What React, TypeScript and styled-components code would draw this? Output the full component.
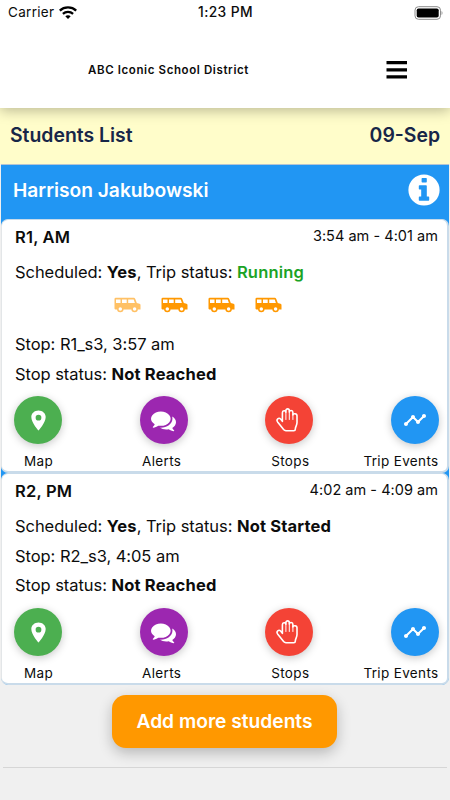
import React from "react";
import styled, { createGlobalStyle } from "styled-components";
import { IoLocationSharp } from "react-icons/io5";
import { MdTimeline } from "react-icons/md";

const GlobalStyle = createGlobalStyle`
  * { box-sizing: border-box; }
  body {
    margin: 0;
    background: #f0f0f0;
    font-family: Inter, "Liberation Sans", sans-serif;
    color: #0c0c0c;
  }
`;

const Screen = styled.main`
  width: 450px;
  height: 800px;
  overflow: hidden;
  display: flex;
  flex-direction: column;
  background: #f0f0f0;
`;

const Header = styled.header`
  height: 108px;
  flex: none;
  background: #fff;
  position: relative;
  z-index: 1;
  box-shadow: 0 3px 12px rgba(0, 0, 0, 0.26);
`;

const StatusBar = styled.div`
  height: 25px;
  padding: 0 7px 0 8px;
  display: grid;
  grid-template-columns: 1fr auto 1fr;
  align-items: center;
  font-size: 13.5px;
  line-height: 25px;
`;

const Carrier = styled.div`
  display: flex;
  align-items: center;
  gap: 5px;
  letter-spacing: 0.3px;
`;

const Clock = styled.div`
  font-size: 13.8px;
  font-weight: 500;
  letter-spacing: 0.4px;
`;

const BatterySlot = styled.div`
  display: flex;
  justify-content: flex-end;
`;

const TitleBar = styled.div`
  height: 83px;
  padding: 7px 43px 0 88px;
  display: flex;
  align-items: center;
  justify-content: space-between;
`;

const District = styled.h1`
  margin: 0;
  font-size: 11.5px;
  font-weight: 600;
  line-height: 20px;
  letter-spacing: 0.61px;
`;

const MenuButton = styled.button`
  margin: 0;
  padding: 0;
  border: 0;
  background: none;
  display: flex;
`;

const ListBar = styled.section`
  height: 56px;
  flex: none;
  padding: 0 10px 2px 10px;
  display: flex;
  align-items: center;
  justify-content: space-between;
  background: #fffdca;
  color: #172648;
  font-size: 19.4px;
  font-weight: 600;
`;

const Student = styled.section`
  flex: none;
  margin: 0 1px;
  background: #2196f3;
  border-top: 1px solid #b4c4d2;
  border-radius: 0 0 8px 8px;
`;

const StudentBar = styled.div`
  height: 54px;
  padding: 0 9px 5px 12px;
  display: flex;
  align-items: center;
  justify-content: space-between;
  color: #fff;
  font-size: 19.2px;
  font-weight: 600;
`;

const Card = styled.article<{ $height: number }>`
  height: ${(p) => p.$height}px;
  padding: 0 8px 0 12px;
  background: #fff;
  border: solid #c9dbea;
  border-width: 1px 2px 2px 1px;
  border-left-color: #e3e6e8;
  border-radius: 7px;
  display: flex;
  flex-direction: column;
`;

const CardTop = styled.div`
  height: 34px;
  flex: none;
  padding: 0 1px;
  display: flex;
  justify-content: space-between;
`;

const Route = styled.h2`
  margin: 0;
  font-size: 16.5px;
  font-weight: 600;
  line-height: 34px;
  letter-spacing: 0.2px;
`;

const Period = styled.span`
  font-size: 14.5px;
  line-height: 31px;
  letter-spacing: 0.03px;
`;

const Line = styled.p<{ $height: number }>`
  margin: 0 0 0 1px;
  height: ${(p) => p.$height}px;
  line-height: ${(p) => p.$height}px;
  flex: none;
  font-size: 16.5px;
  letter-spacing: -0.05px;
  white-space: pre;
`;

const Strong = styled.b<{ $green?: boolean }>`
  font-weight: ${(p) => (p.$green ? 600 : 650)};
  letter-spacing: 0.17px;
  color: ${(p) => (p.$green ? "#1ba326" : "inherit")};
`;

const Buses = styled.div`
  height: 40px;
  flex: none;
  padding: 7px 0 0 99px;
  display: flex;
  gap: 19px;
`;

const BusIcon = styled.svg<{ $dim?: boolean }>`
  width: 28px;
  height: 16px;
  opacity: ${(p) => (p.$dim ? 0.6 : 1)};
`;

const Actions = styled.div`
  margin-top: auto;
  padding-bottom: 1px;
  display: flex;
  justify-content: space-between;
`;

const Action = styled.div`
  width: 48px;
  display: flex;
  flex-direction: column;
  align-items: center;
`;

const Round = styled.button<{ $color: string }>`
  width: 48px;
  height: 48px;
  flex: none;
  padding: 0;
  border: 0;
  border-radius: 50%;
  display: flex;
  align-items: center;
  justify-content: center;
  color: #fff;
  background: ${(p) => p.$color};
  box-shadow: 0 2px 8px rgba(0, 0, 0, 0.22);
`;

const ActionLabel = styled.span<{ $shift: number }>`
  margin-top: 8px;
  margin-left: ${(p) => p.$shift}px;
  font-size: 13.5px;
  line-height: 18px;
  letter-spacing: 0.35px;
  white-space: nowrap;
`;

const Footer = styled.footer`
  margin: 10px 3px 0;
  height: 73px;
  flex: none;
  padding-right: 1px;
  display: flex;
  justify-content: center;
  align-items: flex-start;
  border-bottom: 1px solid #d6d6d6;
`;

const AddButton = styled.button`
  width: 225px;
  height: 53px;
  padding: 0 0 2px;
  border: 0;
  border-radius: 14px;
  background: #ff9800;
  color: #fff;
  font-family: inherit;
  font-size: 19.2px;
  font-weight: 600;
  box-shadow: 0 5px 14px rgba(0, 0, 0, 0.24);
`;

const Wifi = () => (
  <svg width="18" height="13" viewBox="0 0 18 13" fill="none" stroke="#000" strokeWidth="2.3">
    <path d="M.8 4.600C5.300.4 12.700.4 17.200 4.600" />
    <path d="M3.900 7.800c2.900-2.600 7.300-2.600 10.200 0" />
    <path d="M6.300 10.200C7.800 8.900 10.200 8.900 11.700 10.200L9 12.900Z" fill="#000" stroke="none" />
  </svg>
);

const Battery = () => (
  <svg width="29" height="14" viewBox="0 0 29 14">
    <rect x="1" y=".7" width="25.500" height="12.600" rx="3.500" fill="none" stroke="#8c8c8c" />
    <rect x="2.700" y="2.400" width="22" height="9.200" rx="1.800" />
    <path d="M27.500 5v4c1.400-.7 1.400-3.300 0-4z" fill="#999" />
  </svg>
);

const Menu = () => (
  <svg width="21" height="18" viewBox="0 0 21 18">
    <path d="M.5 0h20.500v3.200H.5zM.5 7.200h20.500v3.200H.5zM.5 14.200h20.500v3.200H.5z" />
  </svg>
);

const Info = () => (
  <svg width="32" height="32" viewBox="0 0 32 32">
    <circle cx="16" cy="16" r="15.600" fill="#fff" />
    <path
      fill="#2196f3"
      d="M14.300 3.900h3.800q.7 0 .7.700v3.200q0 .7-.7.700h-3.800q-.7 0-.7-.7V4.600q0-.7.700-.7zM11.500 11.200h6.600q.7 0 .7.700v10.600h1.700q.7 0 .7.700v2.800q0 .7-.7.700h-9q-.7 0-.7-.7v-2.800q0-.7.700-.7h1.700v-7.100h-1.700q-.7 0-.7-.7v-2.800q0-.7.700-.7z"
    />
  </svg>
);

const Bus = ({ dim }: { dim?: boolean }) => (
  <BusIcon $dim={dim} viewBox="0 0 28 16">
    <path
      fill="#ff9800"
      fillRule="evenodd"
      d="M2.800.8h17.500c1 0 1.700.4 2 1.300l1.500 4 2.700.7c.7.200 1 .6 1 1.400v4.200H2.300q-.8 0-.8-.8V2.100Q1.500.8 2.800.8zM3 2.500v3.400h4.500V2.500zM9 2.500v3.400h4.700V2.500zM15.200 2.500v3.400h6.700L20.700 2.500z"
    />
    <circle cx="7.300" cy="12" r="2.500" fill="#fff" stroke="#ff9800" strokeWidth="1.500" />
    <circle cx="21.600" cy="12" r="2.500" fill="#fff" stroke="#ff9800" strokeWidth="1.500" />
  </BusIcon>
);

const Chat = () => (
  <svg width="25" height="25" viewBox="0 0 1792 1792" fill="currentColor">
    <path d="M1408 768q0 139-94 257t-256.500 186.500-353.500 68.500q-86 0-176-16-124 88-278 128-36 9-86 16h-3q-11 0-20.500-8t-11.500-21q-1-3-1-6.500t.5-6.500 2-6l2.500-5 3.500-5.500 4-5 4.500-5 4-4.500q5-6 23-25t26-29.500 22.500-29 25-38.500 20.500-44q-124-72-195-177t-71-224q0-139 94-257t256.500-186.500 353.500-68.500 353.500 68.500 256.500 186.500 94 257zm384 256q0 120-71 224.500t-195 176.500q10 24 20.500 44t25 38.500 22.500 29 26 29.500 23 25q1 1 4 4.500t4.500 5 4 5 3.500 5.500l2.500 5 2 6 .5 6.500-1 6.500q-3 14-13 22t-22 7q-50-7-86-16-154-40-278-128-90 16-176 16-271 0-472-132 58 4 88 4 161 0 309-45t264-129q125-92 192-212t67-254q0-77-23-152 129 71 204 178t75 230z" />
  </svg>
);

const Hand = () => (
  <svg width="26" height="24" viewBox="1 0 26 24" fill="none" stroke="currentColor" strokeLinecap="round" strokeLinejoin="round">
    <path
      strokeWidth="1.600"
      d="M7.400 13.500V4.700C7.400 2.400 10.600 2 10.900 4.100V2.700C10.900.3 14.300.3 14.300 2.700V4C14.500 1.900 17.900 2.100 17.900 4.500V7C18.100 5.200 22 5.200 22 7.800V14.500C22 17.500 20.300 18.600 20.300 21.200Q20.300 22.700 18.800 22.700H10.900Q9.500 22.700 8.600 21.600L2.600 13.900C.9 11.500 3.700 9 5.800 11.200L7.400 13.200"
    />
    <path strokeWidth="1" d="M10.900 4.200V11.500M14.300 4V11.500M17.900 6V11.500" />
  </svg>
);

const ACTIONS = [
  { label: "Map", color: "#4caf50", shift: 1, icon: <IoLocationSharp size={23} /> },
  { label: "Alerts", color: "#9c27b0", shift: -4, icon: <Chat /> },
  { label: "Stops", color: "#f44336", shift: 2, icon: <Hand /> },
  { label: "Trip Events", color: "#2196f3", shift: -28, icon: <MdTimeline size={24} /> },
];

const ActionRow = () => (
  <Actions>
    {ACTIONS.map((a) => (
      <Action key={a.label}>
        <Round $color={a.color} aria-label={a.label}>
          {a.icon}
        </Round>
        <ActionLabel $shift={a.shift}>{a.label}</ActionLabel>
      </Action>
    ))}
  </Actions>
);

export default function App() {
  return (
    <Screen>
      <GlobalStyle />
      <Header>
        <StatusBar>
          <Carrier>
            Carrier
            <Wifi />
          </Carrier>
          <Clock>1:23 PM</Clock>
          <BatterySlot>
            <Battery />
          </BatterySlot>
        </StatusBar>
        <TitleBar>
          <District>ABC Iconic School District</District>
          <MenuButton aria-label="Menu">
            <Menu />
          </MenuButton>
        </TitleBar>
      </Header>
      <ListBar>
        <span>Students List</span>
        <span>09-Sep</span>
      </ListBar>
      <Student>
        <StudentBar>
          <span>Harrison Jakubowski</span>
          <Info />
        </StudentBar>
        <Card $height={254}>
          <CardTop>
            <Route>R1, AM</Route>
            <Period>3:54 am - 4:01 am</Period>
          </CardTop>
          <Line $height={36}>
            Scheduled: <Strong>Yes</Strong>, Trip status: <Strong $green>Running</Strong>
          </Line>
          <Buses>
            <Bus dim />
            <Bus />
            <Bus />
            <Bus />
          </Buses>
          <Line $height={28}>Stop: R1_s3, 3:57 am</Line>
          <Line $height={32}>
            Stop status: <Strong>Not Reached</Strong>
          </Line>
          <ActionRow />
        </Card>
        <Card $height={212}>
          <CardTop>
            <Route>R2, PM</Route>
            <Period>4:02 am - 4:09 am</Period>
          </CardTop>
          <Line $height={36}>
            Scheduled: <Strong>Yes</Strong>, Trip status: <Strong>Not Started</Strong>
          </Line>
          <Line $height={24}>Stop: R2_s3, 4:05 am</Line>
          <Line $height={34}>
            Stop status: <Strong>Not Reached</Strong>
          </Line>
          <ActionRow />
        </Card>
      </Student>
      <Footer>
        <AddButton>Add more students</AddButton>
      </Footer>
    </Screen>
  );
}
